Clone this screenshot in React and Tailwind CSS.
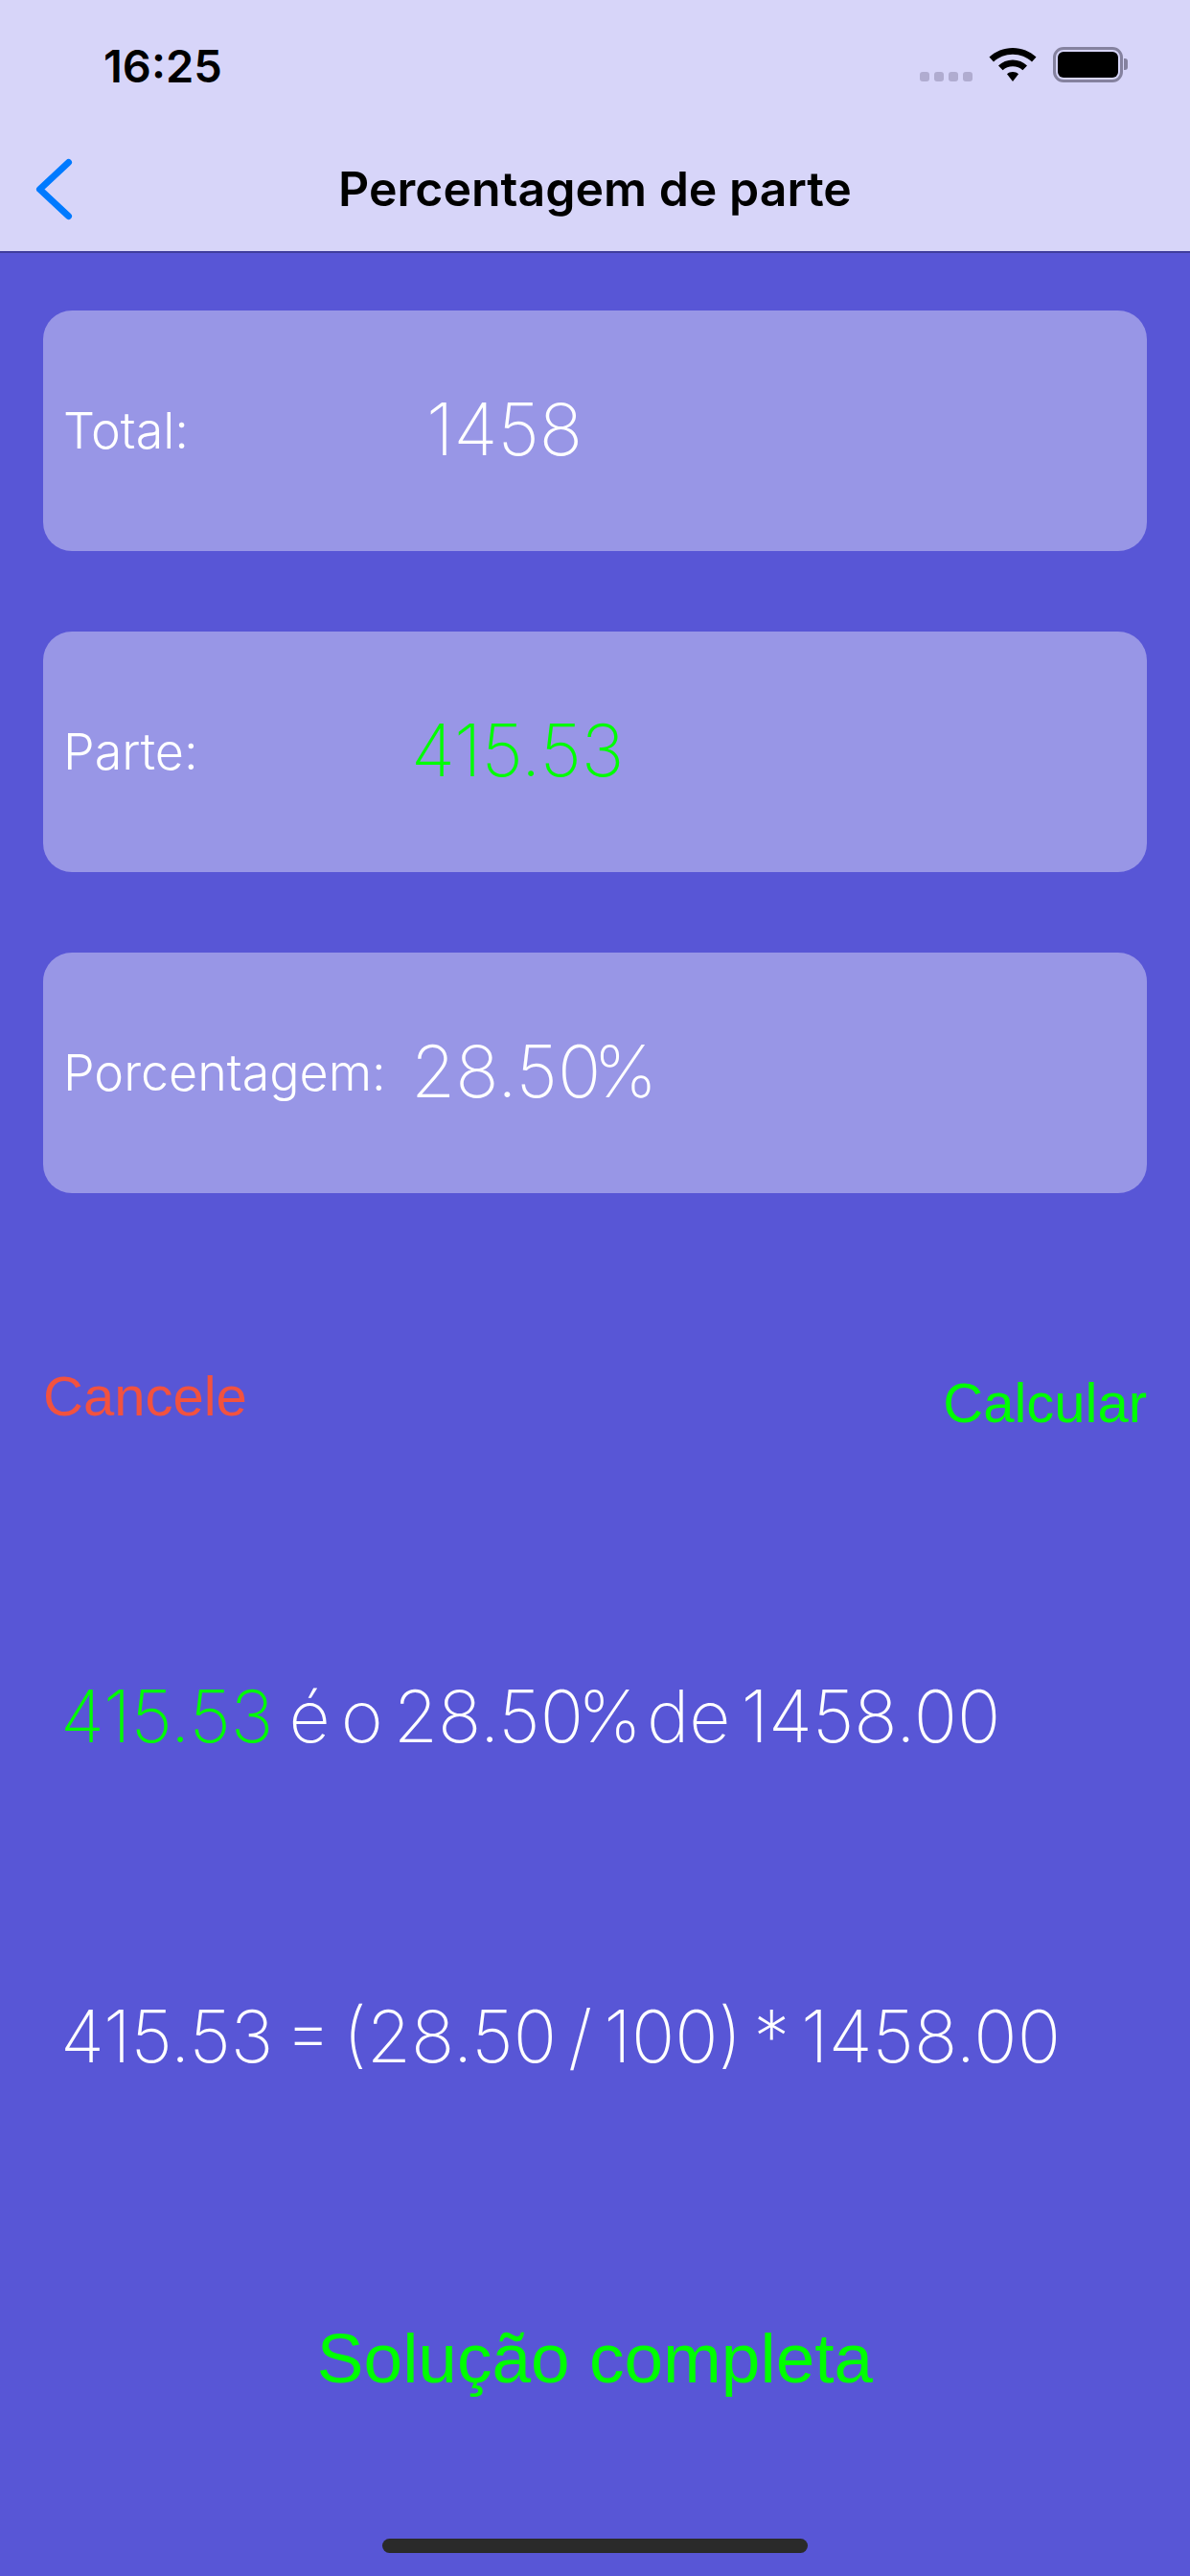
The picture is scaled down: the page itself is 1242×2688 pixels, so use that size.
import React from "react";

const font = { fontFamily: "Inter, sans-serif" };

function Field({ label, value, valueClass, valueMargin }) {
  return (
    <div className="flex h-[251px] items-center rounded-[30px] bg-[#9896e6] pl-[21px]">
      <span className="w-[363px] shrink-0 text-[52px] leading-none font-light text-white">{label}</span>
      <span className={`-mt-[4px] text-[75px] leading-none font-extralight ${valueClass} ${valueMargin}`}>{value}</span>
    </div>
  );
}

export default function App() {
  return (
    <div className="flex h-[2688px] w-[1242px] flex-col overflow-hidden bg-[#5856d6] font-['Inter',sans-serif]" style={font}>
      <header className="flex h-[264px] shrink-0 flex-col border-b-2 border-[#3f3d9c] bg-[#d7d5f9]">
        <div className="flex h-[132px] items-center justify-between pr-[65px] pl-[108px]">
          <span className="mt-[6px] text-[47px] leading-none font-semibold text-black">16:25</span>
          <div className="mt-[3px] flex items-end gap-[17px]">
            <div className="mb-[1px] flex gap-[5px]">
              <span className="h-[10px] w-[10px] rounded-[3px] bg-[#b0acd0]" />
              <span className="h-[10px] w-[10px] rounded-[3px] bg-[#b0acd0]" />
              <span className="h-[10px] w-[10px] rounded-[3px] bg-[#b0acd0]" />
              <span className="h-[10px] w-[10px] rounded-[3px] bg-[#b0acd0]" />
            </div>
            <svg width="50" height="36" viewBox="0 0 50 36" fill="black">
              <path d="M25 0C15.5 0 7 3.6 0.5 9.6L5 14.5C10.2 9.7 17.2 6.7 25 6.7S39.8 9.7 45 14.5L49.5 9.6C43 3.6 34.5 0 25 0Z" />
              <path d="M25 12.5C19.3 12.5 14 14.7 10 18.4L14.6 23.3C17.3 20.8 21 19.3 25 19.3S32.7 20.8 35.4 23.3L40 18.4C36 14.7 30.7 12.5 25 12.5Z" />
              <path d="M25 25C22.6 25 20.6 25.9 19 27.3L25 35L31 27.3C29.4 25.9 27.4 25 25 25Z" />
            </svg>
            <div className="flex items-center gap-[1px]">
              <div className="flex h-[37px] w-[73px] items-center justify-center rounded-[11px] border-[3px] border-[#85829f]">
                <div className="h-[27px] w-[63px] rounded-[6px] bg-black" />
              </div>
              <div className="h-[12px] w-[4px] rounded-r-[3px] bg-[#85829f]" />
            </div>
          </div>
        </div>
        <div className="relative flex h-[132px] items-center justify-center">
          <svg className="absolute top-[33px] left-[36px]" width="42" height="66" viewBox="0 0 42 66" fill="none" stroke="#007aff" strokeWidth="7" strokeLinecap="round" strokeLinejoin="round">
            <path d="M35.5 5.5L5.5 33.5L35.5 61.5" />
          </svg>
          <span className="text-[50px] leading-none font-semibold text-black">Percentagem de parte</span>
        </div>
      </header>

      <main className="flex flex-1 flex-col px-[45px] pt-[60px]">
        <div className="flex flex-col gap-[84px]">
          <Field label="Total:" value="1458" valueClass="text-white" valueMargin="ml-[16px]" />
          <Field label="Parte:" value="415.53" valueClass="text-[#00ff00]" valueMargin="" />
          <Field label="Porcentagem:" value={<>28.5<span className="tracking-[-8px]">0%</span></>} valueClass="text-white" valueMargin="" />
        </div>

        <div className="mt-[183px] flex items-start justify-between font-['Liberation_Sans',sans-serif]">
          <span className="text-[58px] leading-none text-[#f2523f]">Cancele</span>
          <span className="mt-[7px] text-[58px] leading-none text-[#00ff00]">Calcular</span>
        </div>

        <div className="mt-[260px] pl-[18px] text-[75px] leading-none font-extralight [word-spacing:-10px] text-white">
          <span className="mr-[5px] text-[#00ff00]">415.53</span> é o 28.5<span className="tracking-[-6px]">0%</span> de 1458.00
        </div>
        <div className="mt-[259px] pl-[18px] text-[75px] leading-none font-extralight [word-spacing:-9px] text-white">
          415.53 = (28.50 / 100) * 1458.00
        </div>

        <div className="mt-[262px] text-center font-['Liberation_Sans',sans-serif] text-[73px] leading-none text-[#00ff00]">Solução completa</div>
      </main>

      <div className="flex h-[39px] shrink-0 justify-center">
        <div className="h-[15px] w-[444px] rounded-[8px] bg-[#2a2a2a]" />
      </div>
    </div>
  );
}
